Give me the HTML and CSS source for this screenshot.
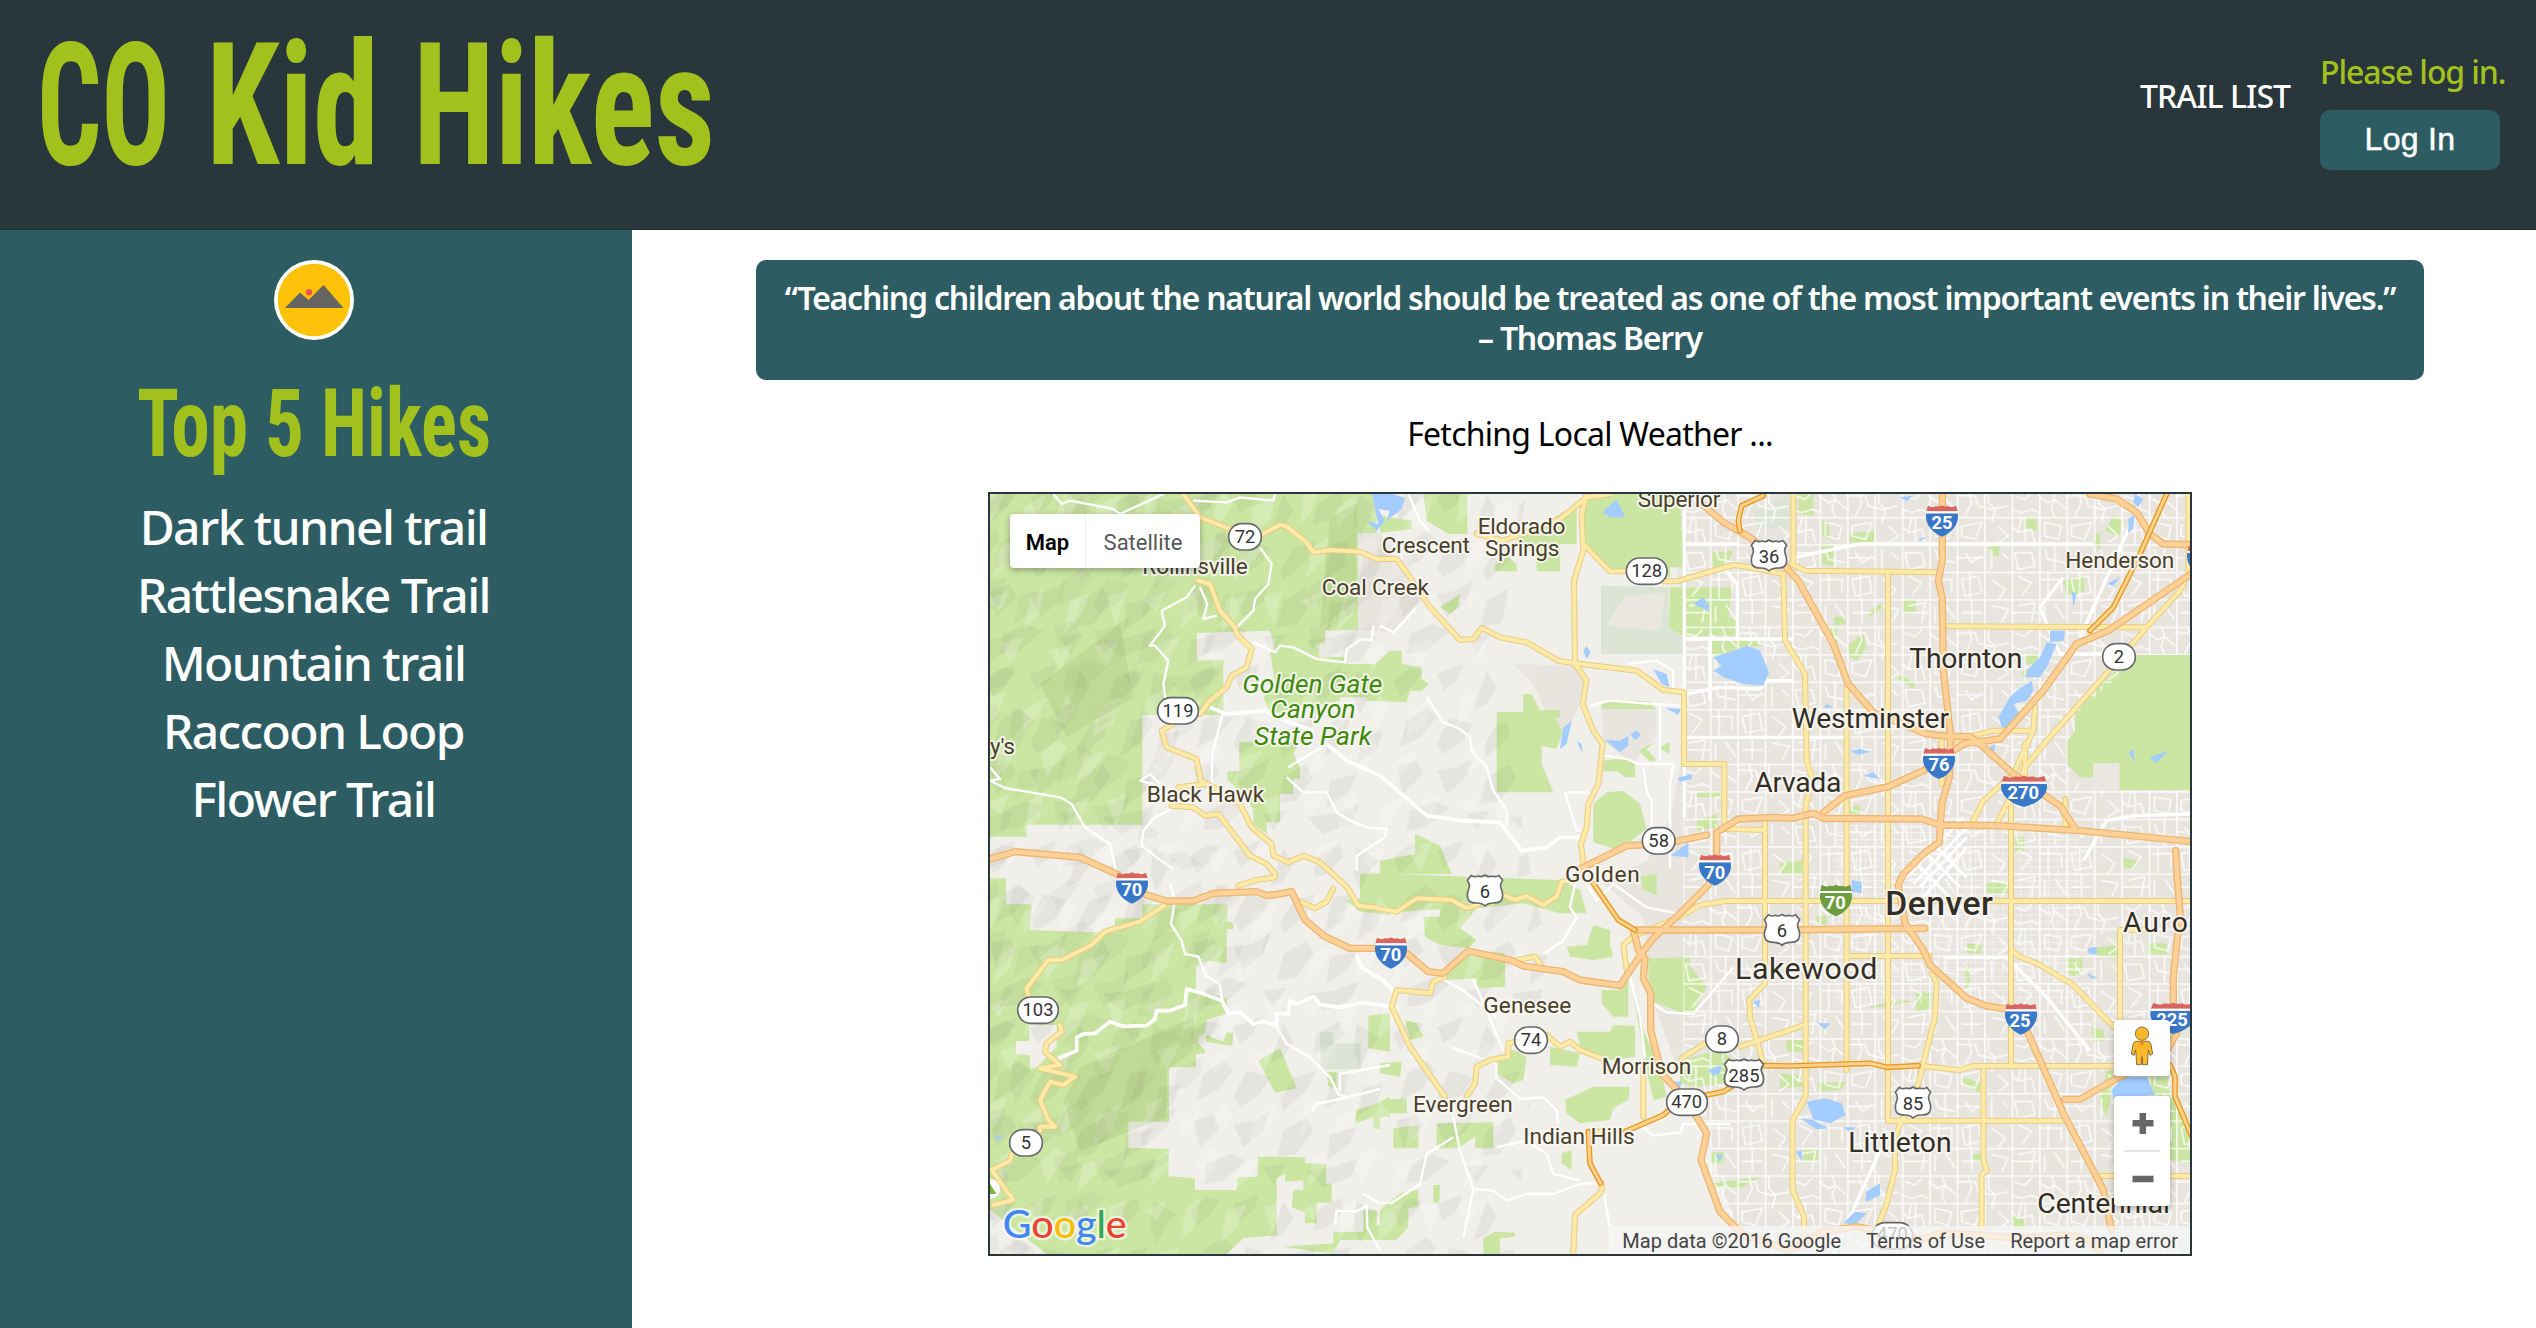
FILE: index.html
```html
<!DOCTYPE html>
<html lang="en">
<head>
<meta charset="utf-8">
<title>CO Kid Hikes</title>
<link rel="stylesheet" href="styles.css">
</head>
<body>
<header class="site-header">
  <h1 class="site-title">
    <svg class="title-art" viewBox="0 0 760 229"><text x="37" y="164" textLength="133" lengthAdjust="spacingAndGlyphs">CO</text><text x="206" y="164" textLength="173" lengthAdjust="spacingAndGlyphs">Kid</text><text x="413" y="164" textLength="302" lengthAdjust="spacingAndGlyphs">Hikes</text></svg>
  </h1>
  <nav class="site-nav">
    <a class="nav-link">TRAIL LIST</a>
    <div class="login">
      <span class="login-note">Please log in.</span>
      <button class="login-button">Log In</button>
    </div>
  </nav>
</header>
<div class="page">
  <aside class="sidebar">
    <svg class="badge" viewBox="0 0 80 80"><circle cx="40" cy="40" r="40" fill="#fff"/><circle cx="40" cy="40" r="36.3" fill="#ffc20a"/><path d="M11 48 26 32.5 34.500 40 49.500 25 69.500 48Z" fill="#64665f"/><circle cx="35" cy="32.300" r="3.200" fill="#ef5350"/></svg>
    <h2 class="side-title">
      <svg class="side-art" viewBox="0 0 360 140"><text x="3" y="116" textLength="111" lengthAdjust="spacingAndGlyphs">Top</text><text x="131" y="116" textLength="39" lengthAdjust="spacingAndGlyphs">5</text><text x="187" y="116" textLength="170" lengthAdjust="spacingAndGlyphs">Hikes</text></svg>
    </h2>
    <ul class="hikes">
      <li>Dark tunnel trail</li><li>Rattlesnake Trail</li><li>Mountain trail</li><li>Raccoon Loop</li><li>Flower Trail</li>
    </ul>
  </aside>
  <main class="content">
    <blockquote class="quote">“Teaching children about the natural world should be treated as one of the most important events in their lives.”<br><span class="author">– Thomas Berry</span></blockquote>
    <p class="weather">Fetching Local Weather ...</p>
    <section class="map">
      <svg class="map-canvas" viewBox="30 30 3600 2280">
        <defs>
          <pattern id="hillsDark" width="610" height="530" patternUnits="userSpaceOnUse">
            <path d="M20 60 70 20 110 30 80 70 40 110ZM150 40 230 10 210 60 170 90ZM300 30 330 80 300 130 260 150 280 90ZM400 60 470 20 480 60 430 110 390 120ZM520 30 590 70 560 100 530 160 510 110ZM60 180 120 140 150 170 100 230 40 260ZM190 170 260 190 230 240 170 280 150 250ZM330 190 400 170 370 230 300 290 290 260ZM450 180 500 170 480 250 420 290ZM540 220 600 210 580 270 520 310ZM30 320 90 300 110 340 50 400ZM150 330 210 320 260 290 240 350 180 400ZM300 350 370 310 390 350 340 420 280 430ZM440 360 520 340 500 390 430 440ZM70 450 140 420 190 440 120 500 60 510ZM240 460 310 450 270 510ZM370 470 450 460 530 430 500 490 420 520Z"/>
          </pattern>
          <pattern id="hillsLight" width="470" height="610" patternUnits="userSpaceOnUse">
            <path fill="#fff" d="M30 30 80 10 50 90 20 120ZM130 70 200 30 180 80 130 130ZM260 20 290 60 250 120 230 90ZM350 70 420 30 400 110 340 150ZM60 190 110 160 90 230 40 280ZM180 200 230 160 260 180 200 270ZM310 210 380 190 330 260 290 290ZM20 350 90 320 60 380ZM150 340 190 310 180 390 130 440ZM270 350 330 330 300 400 250 450ZM380 340 440 320 410 420ZM60 480 130 460 90 540ZM210 500 280 480 240 560ZM340 490 420 460 380 550Z"/>
          </pattern>
          <pattern id="blocks" x="2436" y="16" width="82.300" height="82.300" patternUnits="userSpaceOnUse">
            <path d="M0 0H82.300M0 0V82.300" stroke="#fff" stroke-width="11" fill="none"/>
          </pattern>
          <pattern id="lanes" x="2436" y="16" width="329.200" height="411.500" patternUnits="userSpaceOnUse">
            <path d="M10 20 40 30 60 10M0 60 30 70 60 60 82 70M82 20 110 40 130 30 164 60M120 0 130 30 120 60 130 82M164 20H220L230 50 270 60 320 50M200 0 210 40 190 82M260 0V40L280 60 270 100M0 110 20 130 60 120 70 160M30 82 20 130M100 100 150 110 140 150 100 140ZM180 110 240 100 220 150 180 140ZM290 110 320 140 290 160M10 190H60L70 230 20 240ZM100 180 110 210 160 220M130 165V245M190 190 210 220 240 200M270 180V240M300 190 320 210M20 260 60 280 30 320M90 270H150V310M110 250V330M180 270 230 260 240 310 190 320ZM270 270 310 300 290 330M20 350 70 340 60 400M100 350V400M130 345 160 390M180 370H240M210 330V400M270 350 320 360 300 400M41 82V165M164 205H247M205 247V330M0 370H82" stroke="#fff" stroke-width="5" fill="none"/>
          </pattern>
          <pattern id="downtown" x="2436" y="16" width="27.433" height="20.575" patternUnits="userSpaceOnUse"><path d="M0 0H28M0 0V21" stroke="#fff" stroke-width="4" fill="none"/></pattern>
          <symbol id="interstate" viewBox="0 0 96 94" preserveAspectRatio="none" overflow="visible">
            <path d="M1 24H95Q99 42 89 60 75 84 48 94 21 84 7 60-3 42 1 24Z" fill="currentColor"/><path d="M6 1Q14 5 20 6 27 4 31 2 38 6 48 0 58 6 65 2 69 4 76 6 82 5 90 1L95 18H1Z" fill="#d96560"/><path d="M1 18H95V24H1Z" fill="#fff"/>
          </symbol>
          <symbol id="usroute" viewBox="0 0 110 94" preserveAspectRatio="none" overflow="visible">
            <path d="M14 1Q24 8 35 3 45 8 55 0 65 8 75 3 86 8 96 1L108 16Q98 30 104 42 112 62 104 76 97 84 80 84 64 84 55 93 46 84 30 84 13 84 6 76-2 62 6 42 12 30 2 16Z" fill="#fff" stroke="#66696b" stroke-width="5" stroke-linejoin="round"/>
          </symbol>
          <clipPath id="city"><path d="M2110 30H3630V513H3460L3390 600 3285 690V740L3262 770V842L3300 900H3340V918H3630V2310H2300L2150 1990 2140 1850 2020 1560 1990 1300 1860 1190 2000 1130 2070 1000 1980 990 1970 830 2110 800Z"/></clipPath>
          <g id="arterial">
            <path d="M610 30 660 100 750 135 840 155 900 122 920 128 980 175 1000 205 1050 198 1140 203 1190 225 1250 225 1280 265 1350 370 1440 468 1480 465 1505 432 1560 460 1640 475 1735 530 1780 537 1970 560 2050 618 2112 625V840H2233V1035L2355 1038M655 290 690 300 720 380 765 430 770 450 815 495 800 550 755 575 740 610 690 650 660 690M580 720 545 740 560 790 650 825 662 890 720 920 780 960 815 1030 875 1080 880 1115 925 1135 970 1115 1020 1135 1100 1208 1135 1265 1180 1270 1250 1283 1310 1243 1415 1248 1460 1273 1570 1233 1605 1248 1640 1236 1690 1263 1730 1238 1745 1193 1790 1188M595 910 680 900M575 965 640 970 675 995 715 990 810 1115 860 1140 885 1170V1180L830 1188 775 1205M1060 1213 1040 1253 1005 1273 960 1253M555 1263 480 1313 375 1343 335 1383 245 1428H205L140 1513 150 1558M240 1623 245 1643 200 1678 195 1703 240 1743 180 1753 285 1778 250 1803 210 1793 180 1848 205 1908 225 1928H180V1940M95 2010 90 2030 35 2058 100 2148 40 2163"/>
            <path d="M1820 30 1805 90 1810 200 1782 290 1785 540 1820 590 1808 660 1840 740 1868 780 1855 900 1825 960 1820 1030 1803 1080 1810 1140M1810 180 1890 262 1950 262M2050 292H2090L2260 243 2310 250 2410 270 2415 470 2475 570 2480 830 2495 880 2477 970V1838L2438 1908V2118L2472 2198V2260M1490 150 1570 170 1640 145 1740 105 1820 40 1890 30M2600 600V1758M2724 265V1910H3250M2435 240 2475 260 2870 265M2440 30V240M2900 427 3500 430M3625 30V270L3600 320 3500 430 3400 545 3200 770 3135 850 3050 1020M3165 670 3160 740H3040L2920 770M3160 740 3100 870 3010 950 2980 1010M3135 780V870M3093 960V1748M2885 770V900M3256 945V1025"/>
            <path d="M1970 1353 2100 1298 2160 1263 2240 1251H3630M1940 1458 1930 1383 1970 1348M2600 1416H2850M2855 1468 2870 1498 2865 1598 2815 1798 2745 1958V2058L2720 2158 2690 2238M2815 1745 2940 1758 2980 1746H3400M3093 1398 3120 1418 3180 1443 3280 1503 3410 1638M3420 1338V1628M3420 1338H3500M3010 1758V2028L3020 2058 3005 2073V2248M3360 2076H3630M2355 1015V1498L2308 1548 2310 1598 2350 1738M2280 1688 2430 1638 2470 1623M2105 1723 2175 1678M1700 1653 1740 1688 1770 1673 1800 1698 1865 1723M1605 1673 1585 1678V1718L1530 1728 1490 1748 1485 1798 1460 1838M1395 1838 1290 1688 1235 1568 1250 1518 1350 1528 1360 1493 1395 1478M1990 1738V1898M1865 2098V2123L1785 2193 1780 2310M1825 1943H1935M1610 1428 1665 1418 1685 1448"/>
          </g>
          <g id="freeway">
            <path d="M20 1128 105 1103 300 1120 410 1170 500 1233 560 1251H640L700 1228 830 1223 860 1235 900 1230 935 1223 975 1308 1035 1358 1110 1393H1230L1280 1408 1345 1463 1390 1468 1465 1401 1590 1428 1630 1446 1750 1463 1800 1488 1920 1505 1985 1408 2020 1363 2100 1288 2185 1203 2210 1120V1045L2275 1005 2380 1000 2435 1003 2500 988 2530 1003 2825 1005 2880 1023 3050 1025 3300 1040 3640 1073M1800 1155 1940 1085 2050 1080 2180 1053M2160 55 2230 115 2310 160 2410 240 2455 290 2560 480 2605 600 2680 685 2840 750 2905 757H2970L3000 780 3100 870 3240 965 3290 1040M2887 20V230L2875 290 2887 345 2890 560 2912 757 2908 880 2885 960 2878 1075 2830 1110 2770 1170 2755 1203 2775 1318 2830 1398 2850 1443 2960 1543 3020 1566 3090 1576 3140 1638 3250 1888 3370 2118 3395 2240M2530 985 2595 935 2725 908 2830 860 2920 800 2955 778 3060 765 3190 620 3290 480 3385 440 3640 265M3330 30 3410 45 3470 85 3510 150 3550 180 3640 182M1960 1338H2400L2835 1333M1960 1338 1975 1398 1995 1423 1990 1483 2012 1528V1638L2045 1768 2100 1828 2150 1898 2180 1948 2163 2028 2220 2183 2290 2253 2430 2298 2530 2243 2630 2228 2680 2238 2820 2268 2880 2248 3000 2253 3120 2263 3260 2253 3330 2268 3360 2308M3587 1100 3590 1160 3600 1288 3580 1478V1558L3590 1648 3550 1718 3420 1778 3300 1846H3255"/>
          </g>
          <g id="toll">
            <path d="M3560 30 3480 210 3400 370 3330 440M1840 1198 1915 1308 1965 1338M1935 1943 2050 1893 2100 1848 2230 1823 2270 1798M2350 1745 2430 1746 2670 1738 2720 1750 2815 1745M1825 1943 1830 2038 1862 2098M2350 35 2285 65 2275 110 2280 140M3570 1743 3585 1778V1838L3640 1968"/>
          </g>
        </defs>
        <rect x="30" y="30" width="3600" height="2280" fill="#f0efea"/>
        <path d="M2110 30H3630V2310H2300L2150 1900 2020 1560 1990 1300 1860 1190 2000 1130 2070 1000 2110 800 2110 455 2070 30ZM1134 147H1200L1320 350 1240 445 1134 437ZM1600 540 1780 545 1815 590 1800 660 1740 780 1660 600ZM1865 675H2030V750L1960 840 1870 770Z" fill="#e8e5df"/>
        <!-- parks and forest -->
        <g fill="#cbe6a3">
          <path d="M30 30H1190V147H1134V437L1035 440V480H1018V518H1095V540H1185L1230 500H1265V540L1325 550V585L1347 600 1325 620H1290L1280 655 1160 650V640H1080V650L870 690 850 640 885 600 870 500 888 507 870 440 651 447V530L730 527V693H487V1022H140V1058H30Z"/>
          <path d="M778 773 960 775 940 810 960 850V885H940V930H900V1015H860V1050L820 1020V975L780 920 742 888V862H778Z"/>
          <g transform="translate(1200)">
            <path d="M130 30H262V150H205L140 110ZM0 95 95 110V135L0 147ZM410 150 500 115 590 60V180H540V262H470V200L410 190ZM345 240 385 220 410 240V262H345ZM620 30H900L910 250H870V280L690 265 610 180V90ZM870 310H1057L1045 400 1068 405V455H910L867 435ZM990 467H1120L1150 485 1080 490 1020 520 990 510ZM665 655 700 648 810 652 828 675H665ZM350 685 430 683V630H455L480 678H540V700H525L548 740 530 795 485 785V840L520 925H350ZM670 830 740 820 765 840V880H735L710 862H670ZM640 960 680 925 730 920 780 960 800 1035 760 1065 720 1100 640 1075ZM105 1050 180 1085 215 1170H0V1130L105 1110ZM775 800 830 770 800 795 830 830 810 832ZM835 790 870 775 868 810ZM950 925 1020 920V940H950ZM950 1010 1010 990 1015 1030 950 1040ZM180 370 240 330 235 370 210 390ZM995 205 1060 200 1040 240 1000 250Z"/>
          </g>
          <g transform="translate(2400)">
            <path d="M55 30H100V95L55 90ZM125 110 145 115 150 165 128 160ZM208 148 282 142V175H208ZM125 180 160 185V245L125 240ZM735 103H770V140L735 135ZM625 190 660 185 655 215H635ZM850 290 910 275 915 320 890 330H860ZM975 140 1000 95 1025 110 1020 160ZM945 150 960 145 962 195 945 190ZM160 400 195 395 198 420 165 425ZM150 430H170L172 480 150 470ZM366 350 408 348V385H366ZM205 480 250 450 260 490 230 530 205 515ZM348 580 370 575 405 600 400 615ZM735 512 775 510 770 540H735ZM720 570 745 550 740 585ZM1060 513H1230V918H1018V838H940V880H900L862 842V770L885 740V690L960 600ZM705 1060H735L730 1105 705 1100ZM1030 1120 1070 1130 1065 1155 1030 1150ZM0 1135 70 1130V1170H0ZM210 965H240V990H210ZM265 385 300 360 310 370 270 400Z"/>
          </g>
          <g transform="translate(0 1158)">
            <path d="M30 25H78V103H155L150 180 350 187 405 165V145H487V103H742V155L760 158V178H740V280L680 272 648 290V360L740 385 745 430 680 450 675 490 655 500V520L675 540V550L648 552V592H567V755H445V833L567 837 565 918 645 925V960H770L772 922 833 920V860L975 862V880L1038 882V940L1055 942V998H1010V1060H975V1030L935 1010 940 960H970V930L915 935V910L890 925V1095L790 1105 740 1152H200L30 1020ZM1140 12 1230 10V135L1140 125 1098 90 1140 85ZM835 572 900 535 950 655 885 668ZM1165 437 1230 430V545L1165 535ZM678 495 730 515 740 487 760 490 757 527 678 515ZM1040 605H1070V655L1045 650ZM1127 720 1180 705 1230 680V740H1200V778L1180 775V740L1127 760ZM910 1130 1060 1120V1085H1150V1020H1190V1065H1230V1110H1080L1060 1152Z"/>
          </g>
          <g transform="translate(1200 1158)">
            <path d="M0 10 260 20 540 30 600 60 620 130H540L430 100 290 115 240 175 290 210 265 235 180 225 135 200 130 140H180V118L0 130ZM180 310 265 240 375 250V350L290 355V325L200 330ZM560 230 620 225 640 165 690 180V225L700 260 640 270 570 260ZM665 360H720L745 330V440H700L665 400ZM590 485H690L700 465 765 468V560L690 570 600 530ZM510 530 600 550 590 590 510 585ZM805 265 930 262V290L980 350 940 430 900 425 820 395 805 320ZM900 570 1020 540 1060 570 1040 640 950 650 900 640ZM555 690 640 650H750L745 690 700 715 690 750 600 760 560 730ZM0 580 65 575 60 620 0 610ZM15 690 80 685V730H15ZM170 760 340 757V835H285V800L235 835H170ZM40 775 115 765V835H40ZM350 560 400 540 440 560 430 630 400 640 350 610ZM0 1020 60 970 115 960V1010L85 1015V1070L50 1110H15L0 1060ZM310 1152V1105L345 1085 405 1088V1100L360 1105V1152ZM160 945H180L178 1000H160ZM545 850 575 840V900L545 880ZM990 850 1030 845V880H990ZM1000 940 1140 920 1090 950 1000 955ZM750 320 790 480 840 590 860 680 820 690 800 600ZM780 20 830 10V75L790 60ZM75 450 110 460 130 500 90 510Z"/>
          </g>
          <g transform="translate(2400 1158)">
            <path d="M0 610 60 615 70 650 0 655ZM620 40 685 38V70L620 68ZM560 220 605 225V250H560ZM555 282H567L570 350 555 355ZM407 365 455 370V415L407 425ZM860 265H905L910 300 885 320 860 310ZM930 235 1010 225V265L960 260ZM1105 220H1160V255L1105 250ZM550 620 600 640V670L550 640ZM70 840H115V872L70 875ZM695 1035 740 1050V1085L700 1070ZM1100 620H1165L1170 680 1125 675ZM980 600H1000L990 700 980 740 957 700ZM1170 680 1195 700 1230 790V880L1170 870ZM575 855 605 850V875H585ZM110 137H140V165L110 160ZM20 510H70V545H20ZM110 640 200 635 180 660 120 665ZM935 475 970 480 975 510 940 520ZM265 410 370 390 400 395 280 415Z"/>
          </g>
        </g>
        <path d="M148 1623H230V1688L168 1753H150V1713L108 1711V1671H148Z" fill="#f0efea"/>
        <path d="M1863 305 2067 310V435L2110 455V510H1863ZM2320 80 2440 30V135L2330 130ZM1020 1643 1058 1645 1060 1678H1142V1756H1022Z" fill="#dce5d5"/>
        <path d="M1905 380 1935 340 2055 325 2040 440 1880 425ZM3340 838H3418V918H3340Z" fill="#eae7e1"/>
        <!-- hill shading -->
        <path d="M30 30H1640L1550 500 1640 1100 1700 1400 1600 2310H30Z" fill="url(#hillsDark)" opacity=".045"/>
        <path d="M30 30H1600L1500 600 1600 1100 1650 1400 1500 2310H30Z" fill="url(#hillsLight)" opacity=".2"/>
        <path d="M-160 -80H560V400L300 900 700 1200 400 1900 -160 2300ZM800 200 1050 30 1000 400 800 700Z" fill="url(#hillsDark)" opacity=".035" transform="translate(190 110)"/>
        <path d="M300 1750 640 1600 640 1700 560 1760V1900L300 2000 250 1850ZM1050 100 1130 60V350L1020 430ZM180 600 420 420 460 640 260 760Z" fill="#5b7a20" opacity=".1"/>
        <!-- city streets -->
        <g clip-path="url(#city)">
          <path d="M2110 30H3630V2310H2110Z" fill="url(#lanes)" opacity=".8"/>
          <path d="M2110 30H3630V2310H2110Z" fill="url(#blocks)" opacity=".75"/>
          <path d="M2560 1010H3300V1560H2560Z" fill="url(#downtown)" opacity=".6"/>
          <path d="M2780 1180 2950 1000M2800 1200 2960 1030M2820 1210 2960 1060M2830 1240 2960 1090M2800 1130 2910 1240M2830 1100 2940 1210M2860 1080 2960 1180" stroke="#fff" stroke-width="9"/>
        </g>
        <g fill="none" stroke="#fff" stroke-width="7" stroke-linejoin="round">
          <path d="M220 30 245 60 270 50 400 75 420 90 550 30M640 50 740 55 780 40 880 50 885 30M645 305 620 340 545 380 555 425 510 485 525 485 565 530 550 600 557 650M660 310 682 360 670 405 710 395M840 190 875 240 865 300 825 345 820 380 770 430M820 475 885 505 900 485 940 490 1010 525 1095 535 1100 495 1145 465 1175 470 1180 425M727 690 697 810 695 905M30 850 60 885 30 890 75 912 240 940 275 960 315 1030 390 1080 410 1170M540 900 510 870 480 890 550 910M575 975 525 1000 490 1040 485 1085 530 1120 580 1155M925 850 1030 785M920 880 970 925 1040 925 1070 985 1110 1010 1160 1030 1220 1035 1215 1060 1130 1115 1130 1160"/>
          <path stroke-width="11" d="M690 670 740 690 860 680 900 705 1000 740M1040 780 1100 830 1200 875 1340 995 1410 1005 1440 1010 1560 1015 1625 1100 1700 1090 1740 1060 1800 1060M235 1723 290 1700 290 1660 310 1650 345 1648 390 1613 430 1627 500 1625 525 1605 530 1580 570 1580 615 1563 620 1515 665 1528 725 1550 745 1588 780 1585 820 1620 850 1612 890 1625 890 1588 925 1590 930 1550 950 1560 1000 1538 1020 1562 1080 1570 1150 1556 1240 1568M1130 1410 1145 1450 1210 1490 1240 1520"/>
          <path d="M570 1200 585 1250 573 1320 605 1370 615 1410 655 1418 678 1475 720 1500 725 1540 745 1590M890 1628 920 1680 990 1720 1050 1780 1075 1830 1100 1840M995 1882 1010 1860 1100 1840 1200 1815M1080 1820 1080 1770 1230 1743M1340 640 1390 715 1440 735 1470 760 1475 800 1520 850 1540 920 1580 980V1025M1285 30 1320 110 1345 140M1200 425 1240 445 1310 370M1415 1690 1550 1740 1548 1780 1620 1845 1690 1840 1730 1880 1735 1920M1480 1485 1570 1700M1550 1600 1450 1520 1380 1480M1420 1900 1440 2000 1480 2115 1450 2260M1480 2115 1540 2120 1580 2150 1640 2130 1720 2130 1800 2100 1860 2095M1230 2160 1320 2100 1340 2010 1420 1960M1550 1990 1640 1970 1700 2010 1720 2070 1800 2090M1820 2000 1870 2120 1900 2290M1150 2130 1200 2158 1230 2155M1065 2220 1070 2180 1130 2182 1160 2165 1162 2230 1200 2300M1785 1200 1770 1270 1790 1300 1750 1370 1690 1410M1820 1200 1850 1250 1900 1200 2000 1270 2100 1290M1940 1440 1980 1600 1995 1720M2020 1560 2060 1585 2140 1590 2260 1450M1990 1930 2020 1955 2100 1945 2110 1920H2250M1755 925H1830M1755 925 1790 1040 1820 1040M1870 815 1940 825 1975 840 2080 840M1830 665 1890 650 2020 660 2110 665M2040 665V830M2080 840 2070 900V1150M1990 850 2000 920 2015 950V1060M1940 540 2030 530 2080 560V620"/>
          <path stroke-width="10" d="M2113 40V1000M2113 180 2280 180M2113 465H2440M2230 250 2272 300V460M2120 630 2220 610 2340 615 2360 590H2440M2120 760H2600M2190 470V650M3480 60 3300 460M3250 280 3180 370 3200 420 3240 510H3380M2440 220 2640 180H3340M2890 1420 3080 1420 3200 1540 3330 1700M3630 990 3460 995 3380 1010 3310 1130M2560 2310 2700 2000"/>
        </g>
        <!-- water -->
        <g fill="#a3ccff">
          <path d="M1175 30H1240L1275 42 1265 75 1220 110 1230 80 1195 75 1215 110 1190 140 1160 110 1195 120ZM1868 85 1910 45 1935 100H1890ZM2200 520 2260 500 2300 485 2340 500 2367 565 2350 605 2290 600 2230 580 2200 560 2225 545ZM2020 556 2060 570 2068 610 2045 600ZM1740 795 1750 730 1775 712 1760 780ZM1790 770 1805 780 1807 808ZM1875 768 1920 770 1945 755V785L1920 805ZM1950 750 1970 740 1983 753 1965 768ZM2055 672 2102 675 2095 692ZM1810 500 1820 487 1832 505 1820 525ZM2140 360 2170 340 2187 365 2185 382ZM2093 882 2135 870V885L2100 893ZM2072 1115 2125 1075V1120Z"/>
          <path d="M3210 440H3255L3250 470 3210 475ZM3180 520 3200 475 3230 480 3200 550 3180 580 3135 580 3145 555ZM3110 620 3155 590 3160 620 3140 650 3100 660 3120 690 3070 740 3055 700 3090 640ZM2650 875 2680 865 2700 885ZM2610 800 2640 795 2672 803 2635 812ZM3465 30 3490 45 3475 70 3460 55ZM3445 105 3465 90 3460 130 3445 150ZM3445 805 3460 795 3465 835ZM3508 820 3565 800 3530 838ZM2760 40 2798 35 2780 52ZM3030 790 3045 780 3040 825ZM2815 165 2840 158 2820 172ZM3380 300 3420 280 3400 305ZM3275 320 3290 330 3280 370ZM2540 660 2560 670 2530 672Z"/>
          <path d="M2185 1758 2225 1743 2220 1768 2200 1776ZM2075 1793H2105L2100 1813H2080ZM2320 1553 2340 1548 2337 1573ZM2208 2013H2228L2218 2033ZM2480 1853 2535 1843 2585 1858 2597 1893 2550 1918 2500 1906ZM2460 1903 2500 1908 2545 1933 2510 1936ZM2615 1188 2645 1193V1228L2615 1223ZM2513 1618H2550L2535 1636ZM2590 2218 2625 2183 2660 2188 2625 2223ZM2658 2123 2700 2098V2133L2658 2153ZM3395 1818 3430 1778H3500L3525 1833 3400 1843ZM3325 1393 3350 1388V1413L3325 1408ZM3322 1468 3355 1483H3330ZM2448 2003 2465 1998 2468 2033ZM2590 1930 2630 1930 2610 1945ZM40 1965 70 1950 60 1968Z"/>
        </g>
        <!-- arterial roads, freeways, tollways -->
        <g fill="none" stroke-linejoin="round" stroke-linecap="round">
          <use href="#arterial" class="casing-yellow"/><use href="#arterial" class="road-yellow"/>
          <use href="#freeway" class="casing-orange"/><use href="#freeway" class="road-orange"/>
          <use href="#toll" class="casing-toll"/><use href="#toll" class="road-toll"/>
        </g>
        <circle cx="30" cy="2115" r="30" fill="#fff"/><path d="M30 2100 50 2130H30Z" fill="#7cb342"/>
        <!-- place names -->
        <g class="town">
          <text x="487" y="270" textLength="316">Rollinsville</text><text x="1025" y="333" textLength="322">Coal Creek</text><text x="1205" y="207" textLength="265">Crescent</text><text x="1493" y="150" textLength="263">Eldorado</text><text x="1515" y="215" textLength="223">Springs</text><text x="1973" y="68" textLength="248">Superior</text><text x="3256" y="251" textLength="327">Henderson</text><text x="30" y="811" textLength="75">y's</text><text x="500" y="953" textLength="353">Black Hawk</text><text x="1755" y="1193" textLength="224">Golden</text><text x="1510" y="1586" textLength="264">Genesee</text><text x="1865" y="1770" textLength="269">Morrison</text><text x="1299" y="1884" textLength="299">Evergreen</text><text x="1630" y="1980" textLength="334">Indian Hills</text>
        </g>
        <g class="city">
          <text x="2788" y="553" textLength="339">Thornton</text><text x="2435" y="733" textLength="472">Westminster</text><text x="2323" y="925" textLength="261">Arvada</text><text x="3429" y="1345" textLength="195">Auro</text><text class="large" x="2265" y="1486" textLength="427">Lakewood</text><text x="2605" y="2004" textLength="310">Littleton</text><text x="3172" y="2186" textLength="398">Centennial</text><text class="capital" x="2716" y="1293" textLength="323">Denver</text>
        </g>
        <g class="park"><text x="787" y="627" textLength="420">Golden Gate</text><text x="871" y="703" textLength="256">Canyon</text><text x="822" y="782" textLength="353">State Park</text></g>
        <!-- route markers -->
        <g class="oval">
          <rect x="746" y="119" width="98" height="79" rx="39"/><rect x="533" y="641" width="122" height="79" rx="39"/><rect x="113" y="1539" width="122" height="79" rx="39"/><rect x="89" y="1937" width="98" height="79" rx="39"/><rect x="1939" y="222" width="122" height="79" rx="39"/><rect x="1987" y="1031" width="98" height="79" rx="39"/><rect x="3368" y="479" width="98" height="79" rx="39"/><rect x="1604" y="1629" width="98" height="79" rx="39"/><rect x="2177" y="1626" width="98" height="79" rx="39"/><rect x="2060" y="1815" width="122" height="79" rx="39"/><rect x="2676" y="2216" width="122" height="79" rx="39"/>
        </g>
        <use href="#usroute" x="2312" y="168" width="110" height="94"/><use href="#usroute" x="1460" y="1173" width="110" height="94"/><use href="#usroute" x="2351" y="1291" width="110" height="94"/><use href="#usroute" x="2231" y="1725" width="122" height="94"/><use href="#usroute" x="2744" y="1809" width="110" height="94"/>
        <g class="route-no">
          <text x="795" y="176">72</text><text x="594" y="698">119</text><text x="174" y="1596">103</text><text x="138" y="1995">5</text><text x="2000" y="279">128</text><text x="2036" y="1088">58</text><text x="3417" y="537">2</text><text x="1653" y="1686">74</text><text x="2226" y="1684">8</text><text x="2120" y="1872">470</text><text x="2737" y="2268">470</text><text x="2367" y="237">36</text><text x="1515" y="1241">6</text><text x="2406" y="1359">6</text><text x="2292" y="1794">285</text><text x="2799" y="1878">85</text>
        </g>
        <g color="#3878c7"><use href="#interstate" x="408" y="1165" width="96" height="94"/><use href="#interstate" x="1185" y="1360" width="96" height="94"/><use href="#interstate" x="2157" y="1111" width="96" height="94"/><use href="#interstate" x="2838" y="64" width="96" height="94"/><use href="#interstate" x="2829" y="791" width="96" height="94"/><use href="#interstate" x="3063" y="875" width="138" height="94"/><use href="#interstate" x="3075" y="1558" width="96" height="94"/><use href="#interstate" x="3511" y="1556" width="138" height="94"/><use href="#interstate" x="3621" y="183" width="96" height="94"/></g>
        <use href="#interstate" class="business" x="2520" y="1203" width="96" height="94"/>
        <path d="M2525 1204Q2535 1209 2541 1208L2552 1205Q2560 1208 2568 1203 2576 1208 2584 1205L2595 1208Q2601 1209 2611 1204L2615 1221H2521Z" fill="#6b9e3f"/>
        <g class="interstate-no"><text x="455" y="1235">70</text><text x="1232" y="1430">70</text><text x="2204" y="1184">70</text><text x="2886" y="134">25</text><text x="2877" y="861">76</text><text x="3130" y="945">270</text><text x="3120" y="1628">25</text><text x="3576" y="1626">225</text><text x="2566" y="1275">70</text></g>
        <text class="logo" x="68" y="2261" textLength="372"><tspan fill="#4285f4">G</tspan><tspan fill="#ea4335">o</tspan><tspan fill="#fbbc05">o</tspan><tspan fill="#4285f4">g</tspan><tspan fill="#34a853">l</tspan><tspan fill="#ea4335">e</tspan></text>
      </svg>
      <div class="map-type"><span class="map-tab active">Map</span><span class="map-tab">Satellite</span></div>
      <div class="pegman"><svg viewBox="0 0 168 168"><g fill="#fbb829" stroke="#6b5a3a" stroke-width="2.500"><path d="M64 64H104Q110 66 111 74L116 102 108 106 103 90 100 134H86L84 110 82 134H68L65 90 60 106 52 102 57 74Q58 66 64 64Z"/><circle cx="84" cy="41" r="20"/></g><path d="M74 63H94L84 78Z" fill="#e68a1e"/></svg></div>
      <div class="zoom"><svg viewBox="0 0 56 110"><path d="M28.800 17V38M18.500 27.300H39.500M18.500 83H39.500" stroke="#666" stroke-width="6.500"/><path d="M10 55H46" stroke="#e4e4e4" stroke-width="2"/></svg></div>
      <footer class="map-credit"><span>Map data ©2016 Google</span><span>Terms of Use</span><span>Report a map error</span></footer>
    </section>
  </main>
</div>
</body>
</html>
```
FILE: styles.css
```css
* { box-sizing: border-box; }
body { margin: 0; height: 1328px; display: flex; flex-direction: column; overflow: hidden; background: #fff; color: #000; font: 32px/40px "Noto Sans", "Open Sans", sans-serif; }
h1, h2, p, ul, blockquote { margin: 0; padding: 0; font-weight: 400; }
.site-header { height: 230px; flex: none; display: flex; justify-content: space-between; background: #29363b; border-bottom: 1px solid #222c31; }
.title-art { display: block; width: 760px; height: 229px; fill: #a2c11c; font: 700 170px Roboto, sans-serif; font-stretch: 75%; }
.site-nav { display: flex; gap: 30px; padding: 50px 28px 0 0; color: #fff; }
.nav-link { padding-top: 26px; letter-spacing: -1px; font-weight: 500; }
.login { display: flex; flex-direction: column; align-items: flex-start; width: 188px; padding-top: 2px; }
.login-note { color: #a2c11c; white-space: nowrap; letter-spacing: -1.1px; line-height: 40px; font-weight: 500; }
.login-button { width: 180px; height: 60px; margin-top: 18px; border: 0; border-radius: 10px; background: #2d5d62; color: #fff; font: 32px/58px "Liberation Sans", Arial, sans-serif; padding: 0 0 2px; letter-spacing: .3px; -webkit-text-stroke: .5px #fff; }
.page { flex: 1; display: flex; min-height: 0; }
.sidebar { width: 632px; flex: none; padding: 30px 5px 0 0; background: #2d5d62; text-align: center; color: #fff; }
.badge { display: block; width: 80px; height: 80px; margin: 0 auto; }
.side-title { height: 140px; }
.side-art { display: block; width: 360px; height: 140px; margin: 0 auto; fill: #a2c11c; font: 700 94px Roboto, sans-serif; font-stretch: 75%; text-align: left; }
.hikes { list-style: none; padding-top: 13px; font-size: 48px; line-height: 68px; font-weight: 500; letter-spacing: -1.6px; }
.content { flex: 1; display: flex; flex-direction: column; align-items: center; padding: 30px 112px 0 124px; }
.quote { width: 1668px; height: 120px; padding-top: 18px; border-radius: 10px; background: #2d5d62; color: #fff; text-align: center; font-weight: 600; letter-spacing: -1.25px; white-space: nowrap; }
.weather { margin-top: 34px; letter-spacing: -.75px; }
.map { position: relative; width: 1204px; height: 764px; margin-top: 38px; border: 2px solid #29363b; overflow: hidden; font-family: Roboto, sans-serif; }
.map-canvas { display: block; width: 1200px; height: 760px; font-family: Roboto, sans-serif; }
.casing-yellow { stroke: #e6cd84; stroke-width: 18px; }
.road-yellow { stroke: #ffe9a6; stroke-width: 12px; }
.casing-orange { stroke: #ecb673; stroke-width: 22px; }
.road-orange { stroke: #ffd196; stroke-width: 14px; }
.casing-toll { stroke: #e6991c; stroke-width: 17px; }
.road-toll { stroke: #ffd18d; stroke-width: 9px; }
.town text, .city text, .park text { paint-order: stroke; stroke: rgba(248, 247, 242, .85); stroke-width: 12px; stroke-linejoin: round; }
.town { font-size: 68px; fill: #4a3f2a; }
.city { font-size: 85px; fill: #332e26; }
.city .large { font-size: 91px; }
.city .capital { font-size: 101px; font-weight: 500; }
.park { font-size: 79px; font-style: italic; fill: #3f8a0a; }
.oval { fill: #fff; stroke: #66696b; stroke-width: 5px; }
.route-no { font-size: 55px; fill: #333; text-anchor: middle; }
.interstate-no { font-size: 55px; font-weight: 700; fill: #fff; text-anchor: middle; }
.business { color: #6b9e3f; }
.logo { font: 500 118px Lato, sans-serif; paint-order: stroke; stroke: rgba(255, 255, 255, .6); stroke-width: 14px; stroke-linejoin: round; }
.map-type, .pegman, .zoom, .map-credit { position: absolute; background: #fff; }
.map-type { left: 20px; top: 20px; width: 190px; height: 54px; display: flex; border-radius: 4px; box-shadow: 0 2px 6px rgba(0, 0, 0, .3); font-size: 22px; line-height: 57px; color: #565656; }
.map-tab { flex: 1; text-align: center; }
.map-tab.active { flex: 0 0 76px; color: #000; font-weight: 600; border-right: 1px solid #eee; }
.pegman, .zoom { right: 20px; width: 56px; border-radius: 4px; box-shadow: 0 2px 6px rgba(0, 0, 0, .3); }
.pegman { top: 526px; height: 56px; }
.zoom { top: 602px; height: 110px; }
.pegman svg, .zoom svg { display: block; width: 100%; height: 100%; }
.map-credit { right: 0; bottom: 0; height: 28px; padding: 0 12px 0 14px; display: flex; gap: 25px; background: rgba(245, 245, 245, .75); color: #444; font-size: 20px; line-height: 30px; letter-spacing: .05px; white-space: nowrap; }
```
